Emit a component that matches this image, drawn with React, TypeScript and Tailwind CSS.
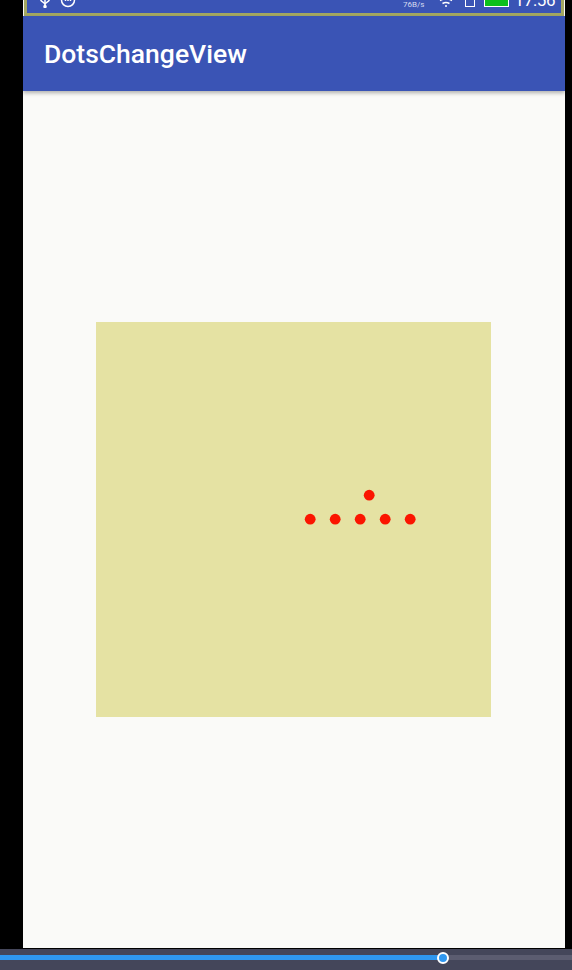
const bottomDots = [214.2, 239.2, 264.2, 289.2, 314.2];

function DotsCanvas() {
  return (
    <div className="h-[395px] w-[395px] bg-[#e5e2a3]">
      <svg width="395" height="395" viewBox="0 0 395 395" className="block">
        <circle cx="273.2" cy="173.2" r="5.4" fill="#fb1500" />
        {bottomDots.map((cx) => (
          <circle key={cx} cx={cx} cy="197.2" r="5.4" fill="#fb1500" />
        ))}
      </svg>
    </div>
  );
}

function StatusBar() {
  return (
    <div className="ml-px flex h-4 w-[540px] items-end overflow-hidden border-x-[3px] border-b-[3px] border-[#a4a862] bg-[#3a54b5] text-white">
      <svg width="12" height="9" viewBox="0 0 12 9" fill="none" stroke="white" strokeWidth="1.5" className="mb-[5px] ml-[12px] shrink-0">
        <path d="M6 0v7" />
        <path d="M1.5 0c0 3 4.500 3 4.500 5.500M10.500 0c0 3-4.500 3-4.500 5.500" />
        <circle cx="6" cy="7.500" r="1" fill="white" />
      </svg>
      <svg width="16" height="16" viewBox="0 0 16 16" fill="none" stroke="white" strokeWidth="1.5" className="mb-[5px] ml-[9px] shrink-0">
        <circle cx="8" cy="8" r="6.5" />
        <path d="M5.500 7v2M8 7v2M10.500 7v2" />
      </svg>
      <span className="mb-[3px] ml-[327px] shrink-0 font-['Roboto',sans-serif] text-[8px] leading-[10px] text-[#d5daf0]">76B/s</span>
      <svg width="14" height="8" viewBox="0 0 14 8" fill="none" stroke="white" strokeWidth="1.5" className="mb-[6px] ml-[15px] shrink-0">
        <path d="M1 1.500c3.500-2 8.500-2 12 0M3.500 4.500c2-1.200 5-1.200 7 0" />
        <path d="M6 7h2" />
      </svg>
      <div className="mb-[6px] ml-[12px] h-[12px] w-[10px] shrink-0 border border-white" />
      <div className="mb-[6px] ml-[9px] h-[12px] w-[25px] shrink-0 border border-white bg-[#0cc01b]" />
      <span className="mb-[4px] ml-[5px] shrink-0 font-['Roboto',sans-serif] text-[17px] leading-[18px] tracking-[-0.3px]">17:56</span>
    </div>
  );
}

export default function App() {
  return (
    <div className="flex h-[970px] w-[572px] flex-col overflow-hidden bg-black">
      <div className="ml-[23px] flex h-[948px] w-[542px] flex-col bg-[#fafaf8]">
        <StatusBar />
        <div className="flex h-[75px] items-center bg-[#3a54b5] pl-[21px] shadow-[0_2px_4px_rgba(0,0,0,0.3)]">
          <h1 className="font-['Roboto',sans-serif] text-[26.5px] font-medium text-white">DotsChangeView</h1>
        </div>
        <div className="flex flex-1 items-center justify-center pr-px">
          <DotsCanvas />
        </div>
      </div>
      <div className="mt-[1px] h-[21px] bg-[#44465a] pt-[6px]">
        <div className="relative h-[5px] w-full bg-[#5b5c70]">
          <div className="h-full w-[443px] bg-[#2f97f0]" />
          <div className="absolute left-[437px] top-[-3.5px] h-[12px] w-[12px] rounded-full border-2 border-white bg-[#2f97f0]" />
        </div>
      </div>
    </div>
  );
}
